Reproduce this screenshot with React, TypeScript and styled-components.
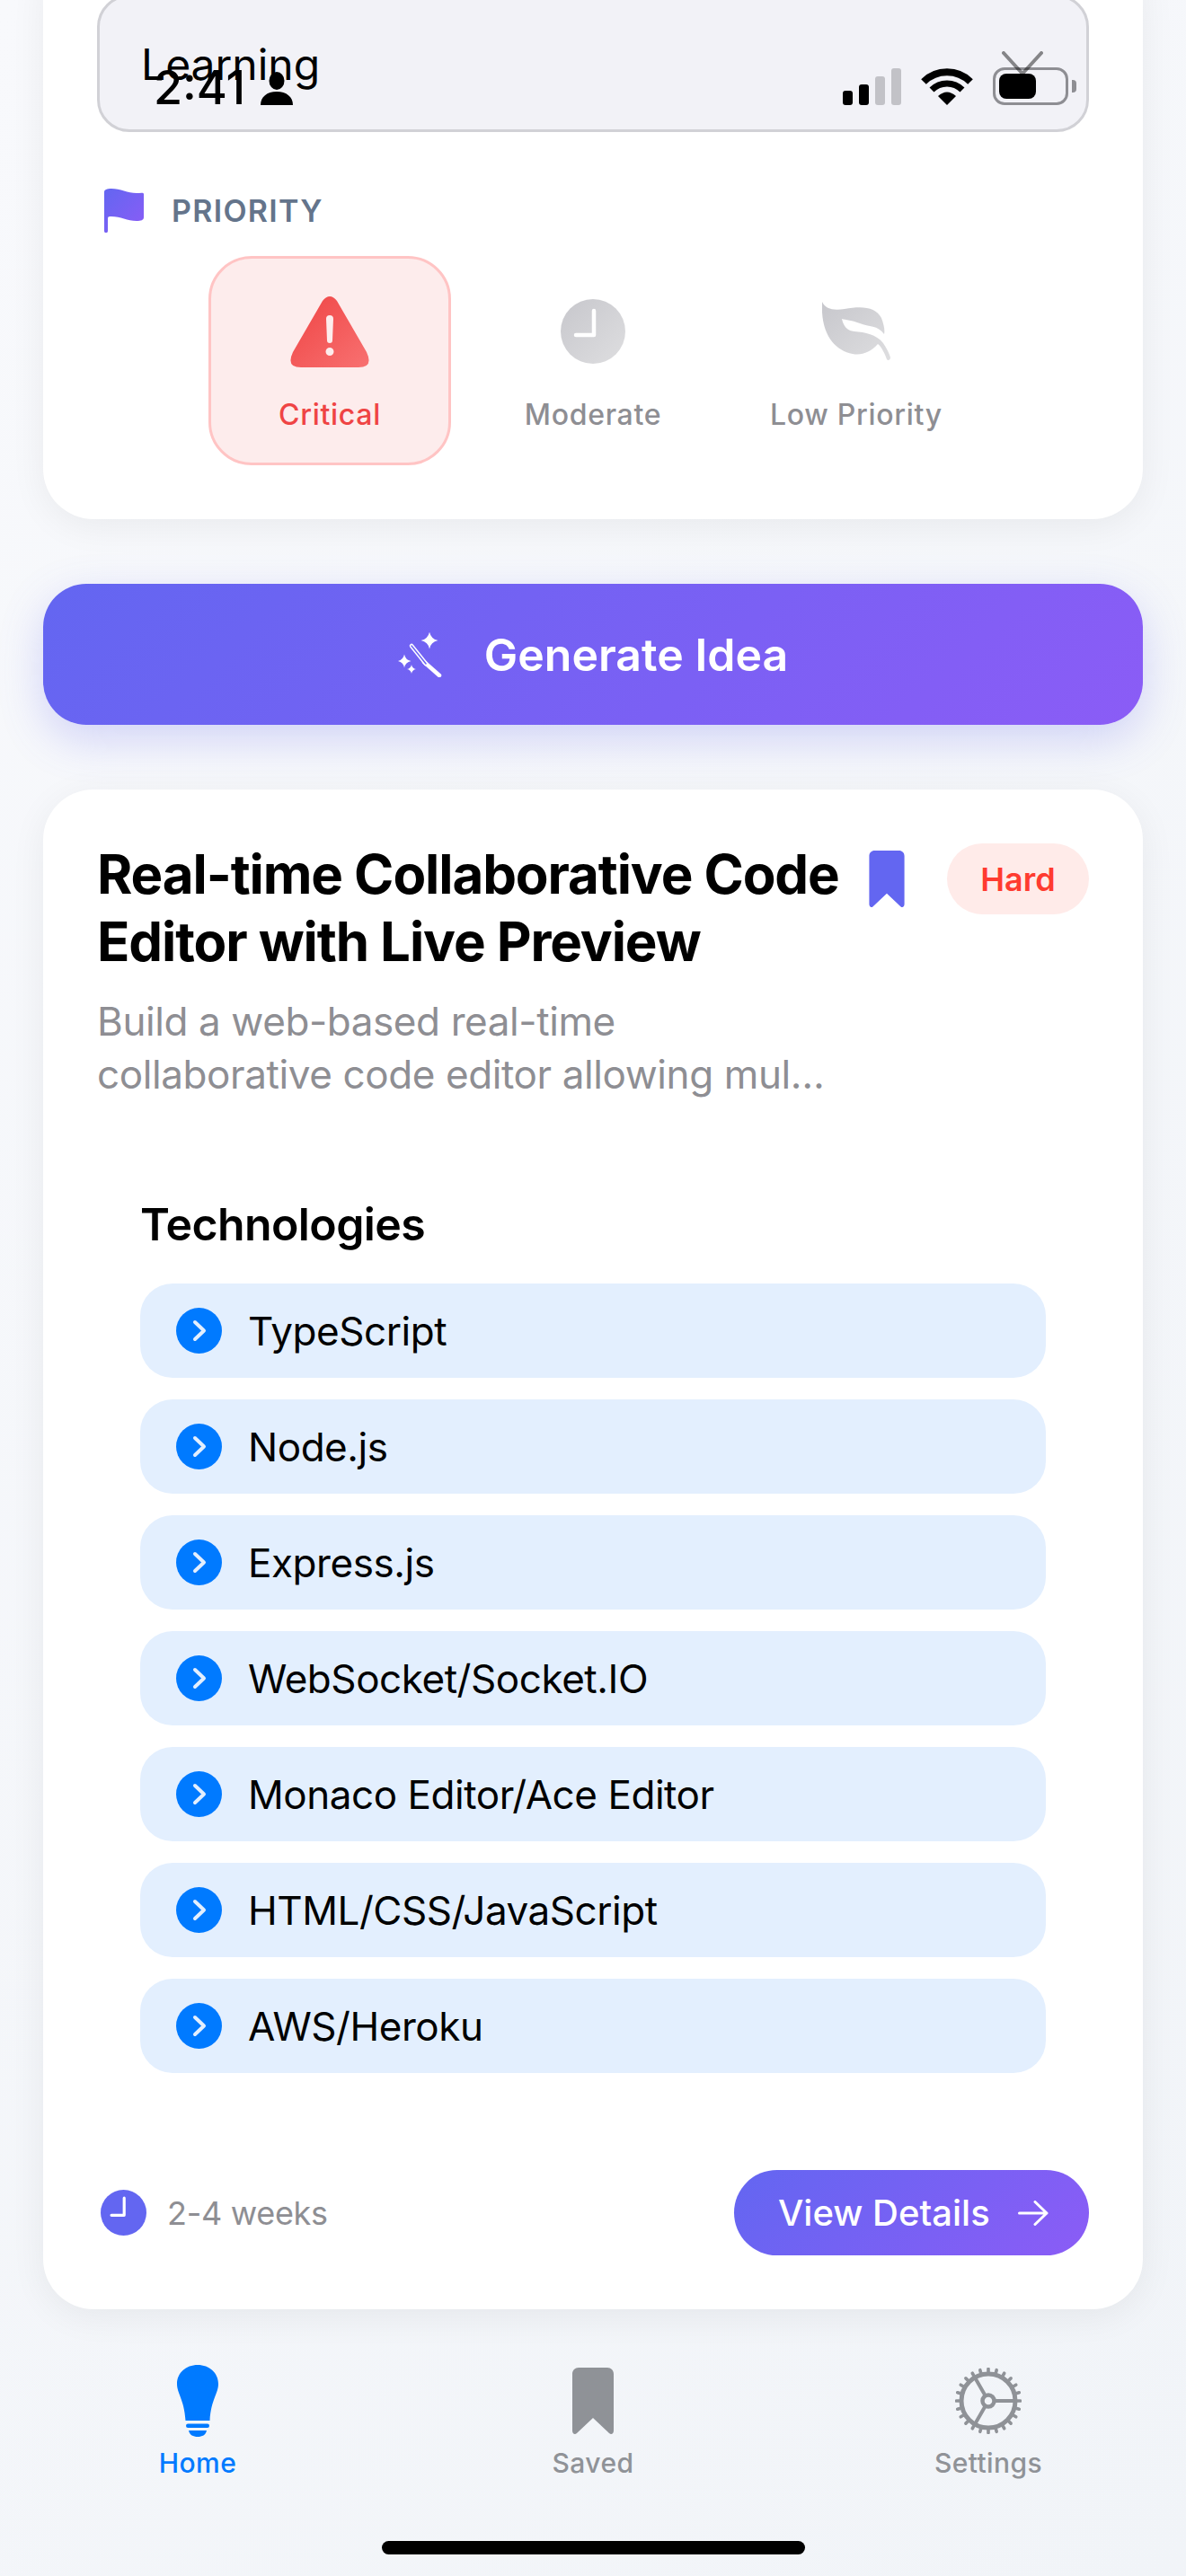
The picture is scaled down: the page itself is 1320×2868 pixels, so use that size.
import React from "react"
import styled, { createGlobalStyle } from "styled-components"

const GlobalStyle = createGlobalStyle`
  html, body {
    margin: 0;
    padding: 0;
    background: #f3f5f9;
    font-family: Inter, "Liberation Sans", sans-serif;
  }
  * {
    box-sizing: border-box;
  }
`

const technologies = [
  "TypeScript",
  "Node.js",
  "Express.js",
  "WebSocket/Socket.IO",
  "Monaco Editor/Ace Editor",
  "HTML/CSS/JavaScript",
  "AWS/Heroku",
]

/**
 * Icons
 */

const Flag = () => (
  <svg width="44" height="49" viewBox="0 0 44 49">
    <defs>
      <linearGradient id="flagFill" x1="0" y1="0" x2="1" y2="1">
        <stop offset="0" stopColor="#6366f1" />
        <stop offset="1" stopColor="#8b5cf6" />
      </linearGradient>
    </defs>
    <path
      fill="url(#flagFill)"
      d="M0 4C0 1 3 0 8 0C18 0 26 5 36 5C40 5 44 4 44 6V32C44 35 41 36 36 36C26 36 18 31 8 31C6 31 4 31 4 33V47C4 50 0 50 0 47Z"
    />
  </svg>
)

const Warning = () => (
  <svg width="88" height="80" viewBox="0 0 88 80">
    <defs>
      <linearGradient id="warnFill" x1="0" y1="0" x2="1" y2="1">
        <stop offset="0" stopColor="#ef4444" />
        <stop offset="1" stopColor="#f87171" />
      </linearGradient>
    </defs>
    <path
      fill="url(#warnFill)"
      fillRule="evenodd"
      d="M36 6Q44 -4 52 6L85 63Q93 80 76 80H12Q-5 80 3 63ZM40 26Q40 22 44 22Q48 22 48 26L47 50Q47 53 44 53Q41 53 41 50ZM44 58A4.5 4.5 0 1 0 44 67A4.5 4.5 0 1 0 44 58Z"
    />
  </svg>
)

const ClockFace = ({ size, fill }: { size: number; fill: string }) => (
  <svg width={size} height={size} viewBox="0 0 72 72">
    <circle cx="36" cy="36" r="36" fill={fill} />
    <path d="M37 13V40H17" fill="none" stroke="#fff" strokeWidth="4.5" strokeLinecap="round" strokeLinejoin="round" />
  </svg>
)

const GrayClock = () => (
  <svg width="0" height="0" style={{ position: "absolute" }}>
    <defs>
      <linearGradient id="grayFill" x1="0" y1="0" x2="1" y2="1">
        <stop offset="0" stopColor="#c7c7cc" />
        <stop offset="1" stopColor="#dedee0" />
      </linearGradient>
    </defs>
  </svg>
)

const Leaf = () => (
  <svg width="76" height="66" viewBox="0 0 76 66">
    <path
      fill="url(#grayFill)"
      d="M0 0C4 8 12 10 25 8C45 4 60 6 66 18C69 26 70 32 69 36C62 26 52 28 42 24C34 21 26 20 22 19C24 28 28 32 36 33C48 34 60 36 68 46C72 52 75 58 76 62C76 65 73 66 72 64C70 58 66 50 62 47C54 56 44 60 34 58C14 54 -2 36 0 0Z"
    />
  </svg>
)

const Star = ({ x, y, r }: { x: number; y: number; r: number }) => {
  const k = r * 0.16
  return (
    <path
      fill="#fff"
      d={`M${x} ${y - r}Q${x + k} ${y - k} ${x + r} ${y}Q${x + k} ${y + k} ${x} ${y + r}Q${x - k} ${y + k} ${x - r} ${y}Q${x - k} ${y - k} ${x} ${y - r}Z`}
    />
  )
}

const Wand = () => (
  <svg width="50" height="50" viewBox="0 0 50 50">
    <path d="M29 33L46 48" fill="none" stroke="#fff" strokeWidth="4.5" strokeLinecap="round" />
    <path d="M15 15L31 35" fill="none" stroke="#fff" strokeWidth="4.5" strokeLinecap="round" />
    <path d="M15 15L31 35" fill="none" stroke="#6d65f3" strokeWidth="1.6" strokeLinecap="round" />
    <Star x={35} y={9} r={9.5} />
    <Star x={7} y={32} r={7.5} />
    <Star x={15} y={41} r={5} />
  </svg>
)

const Bookmark = ({ width, height, fill }: { width: number; height: number; fill: string }) => (
  <svg width={width} height={height} viewBox="0 0 46 74">
    <path fill={fill} d="M7 0H39C43 0 46 3 46 7V70C46 74 43 75 41 73L23 56L5 73C3 75 0 74 0 70V7C0 3 3 0 7 0Z" />
  </svg>
)

const Bulb = () => (
  <svg width="46" height="80" viewBox="0 0 46 80">
    <g fill="#007aff">
      <path d="M23 0C36 0 46 9 46 21C46 32 38 38 36.500 62H9.500C8 38 0 32 0 21C0 9 10 0 23 0Z" />
      <rect x="10" y="65.500" width="26" height="4.500" rx="2.200" />
      <path d="M13 73H33C32 78 28 80 23 80C18 80 14 78 13 73Z" />
    </g>
  </svg>
)

const Gear = () => {
  const teeth = Array.from({ length: 24 }, (_, i) => (i * Math.PI) / 12)
  return (
    <svg width="74" height="74" viewBox="0 0 74 74">
      <g fill="none" stroke="#8f9297">
        <circle cx="37" cy="37" r="30" strokeWidth="5" />
        <circle cx="37" cy="37" r="6.500" strokeWidth="4.500" />
        {teeth.map((a) => (
          <line
            key={a}
            x1={37 + Math.cos(a) * 31}
            y1={37 + Math.sin(a) * 31}
            x2={37 + Math.cos(a) * 35.5}
            y2={37 + Math.sin(a) * 35.5}
            strokeWidth="3.600"
            strokeLinecap="round"
          />
        ))}
        <path d="M44 37H66M33.500 31L22 11M33.500 43L22 63" strokeWidth="4" />
      </g>
    </svg>
  )
}

const Chevron = () => (
  <svg width="51" height="51" viewBox="0 0 51 51">
    <circle cx="25.500" cy="25.500" r="25.500" fill="#007aff" />
    <path d="M21 16L31 25.500L21 35" fill="none" stroke="#e3effe" strokeWidth="4" strokeLinecap="round" strokeLinejoin="round" />
  </svg>
)

const Arrow = () => (
  <svg width="34" height="28" viewBox="0 0 34 28">
    <path d="M1.500 14H32M19 1.500L32 14L19 26.500" fill="none" stroke="#fff" strokeWidth="3" strokeLinecap="round" strokeLinejoin="round" />
  </svg>
)

const Person = () => (
  <svg width="36" height="37" viewBox="0 0 36 37">
    <ellipse cx="18" cy="10" rx="8.500" ry="10" />
    <path d="M0 37C0 28 7 22 18 22C29 22 36 28 36 37Z" />
  </svg>
)

const Signal = () => (
  <svg width="65" height="41" viewBox="0 0 65 41">
    <rect x="0" y="25" width="11" height="16" rx="3" />
    <rect x="18" y="18" width="11" height="23" rx="3" />
    <rect x="36" y="9" width="11" height="32" rx="3" fill="#c2c2c7" />
    <rect x="54" y="0" width="11" height="41" rx="3" fill="#c2c2c7" />
  </svg>
)

const Wifi = () => (
  <svg width="58" height="42" viewBox="0 0 58 42">
    <path d="M3 16A37 37 0 0 1 55 16" fill="none" stroke="#000" strokeWidth="8" />
    <path d="M12 25A24 24 0 0 1 46 25" fill="none" stroke="#000" strokeWidth="7" />
    <path d="M19 32Q29 23 39 32L29 42Z" />
  </svg>
)

const Antenna = () => (
  <AntennaMark width="46" height="27" viewBox="0 0 46 27">
    <path d="M2 2L23 25L44 2" fill="none" stroke="#000" strokeOpacity="0.45" strokeWidth="4" strokeLinecap="round" strokeLinejoin="round" />
  </AntennaMark>
)

/**
 * App
 */

export default function App() {
  return (
    <Page>
      <GlobalStyle />
      <GrayClock />
      <StatusBar>
        <TimeGroup>
          <Time>2:41</Time>
          <Person />
        </TimeGroup>
        <StatusIcons>
          <Signal />
          <Wifi />
          <BatteryWrap>
            <Battery>
              <BatteryLevel />
              <Antenna />
            </Battery>
            <BatteryTip />
          </BatteryWrap>
        </StatusIcons>
      </StatusBar>

      <Card>
        <CategoryField>Learning</CategoryField>
        <SectionHeader>
          <Flag />
          <SectionLabel>PRIORITY</SectionLabel>
        </SectionHeader>
        <PriorityRow>
          <PriorityOption $selected>
            <IconSlot>
              <Warning />
            </IconSlot>
            <PriorityText $selected>Critical</PriorityText>
          </PriorityOption>
          <PriorityOption>
            <IconSlot>
              <ClockFace size={72} fill="url(#grayFill)" />
            </IconSlot>
            <PriorityText>Moderate</PriorityText>
          </PriorityOption>
          <PriorityOption>
            <IconSlot>
              <Leaf />
            </IconSlot>
            <PriorityText>Low Priority</PriorityText>
          </PriorityOption>
        </PriorityRow>
      </Card>

      <GenerateButton>
        <Wand />
        <GenerateText>Generate Idea</GenerateText>
      </GenerateButton>

      <ResultCard>
        <ResultHead>
          <Title>Real-time Collaborative Code Editor with Live Preview</Title>
          <BookmarkSlot>
            <Bookmark width={40} height={63} fill="#6366f1" />
          </BookmarkSlot>
          <Difficulty>Hard</Difficulty>
        </ResultHead>
        <Description>Build a web-based real-time collaborative code editor allowing mul…</Description>

        <TechSection>
          <TechHeading>Technologies</TechHeading>
          <TechList>
            {technologies.map((tech) => (
              <TechRow key={tech}>
                <Chevron />
                <TechName>{tech}</TechName>
              </TechRow>
            ))}
          </TechList>
        </TechSection>

        <ResultFooter>
          <Duration>
            <ClockFace size={51} fill="#6366f1" />
            <DurationText>2-4 weeks</DurationText>
          </Duration>
          <DetailsButton>
            <DetailsText>View Details</DetailsText>
            <Arrow />
          </DetailsButton>
        </ResultFooter>
      </ResultCard>

      <TabBar>
        <Tab>
          <TabIcon>
            <Bulb />
          </TabIcon>
          <TabLabel $active>Home</TabLabel>
        </Tab>
        <Tab>
          <TabIcon>
            <Bookmark width={46} height={74} fill="#8f9297" />
          </TabIcon>
          <TabLabel>Saved</TabLabel>
        </Tab>
        <Tab>
          <TabIcon>
            <Gear />
          </TabIcon>
          <TabLabel>Settings</TabLabel>
        </Tab>
      </TabBar>
      <HomeIndicator />
    </Page>
  )
}

/**
 * Styled components
 */

const Page = styled("div")`
  position: relative;
  display: flex;
  flex-direction: column;
  width: 1320px;
  height: 2868px;
  padding: 0 48px;
  overflow: hidden;
  background: linear-gradient(135deg, #f8f9fc 0%, #f1f4f8 100%);
`

const StatusBar = styled("div")`
  position: absolute;
  top: 0;
  left: 171px;
  right: 122px;
  height: 117px;
  display: flex;
  align-items: flex-end;
  justify-content: space-between;
  z-index: 2;
`

const TimeGroup = styled("div")`
  display: flex;
  align-items: flex-end;
  gap: 17px;
`

const Time = styled("span")`
  font-size: 52px;
  line-height: 38px;
  font-weight: 500;
  color: #000;
`

const StatusIcons = styled("div")`
  display: flex;
  align-items: flex-end;
  gap: 22px;
`

const BatteryWrap = styled("div")`
  display: flex;
  align-items: center;
  gap: 4px;
`

const Battery = styled("div")`
  position: relative;
  width: 84px;
  height: 42px;
  padding: 4px;
  border: 3px solid #8e8e93;
  border-radius: 13px;
`

const BatteryLevel = styled("div")`
  width: 41px;
  height: 28px;
  border-radius: 8px;
  background: #000;
`

const BatteryTip = styled("div")`
  width: 5px;
  height: 14px;
  border-radius: 0 4px 4px 0;
  background: #8e8e93;
`

const AntennaMark = styled("svg")`
  position: absolute;
  top: -21px;
  left: 7px;
`

const Card = styled("section")`
  display: flex;
  flex-direction: column;
  flex: none;
  height: 638px;
  margin-top: -60px;
  padding: 54px 60px 60px;
  border-radius: 56px;
  background: #fff;
  box-shadow: 0 8px 40px rgba(0, 0, 0, 0.06);
`

const CategoryField = styled("div")`
  flex: none;
  height: 153px;
  padding: 46px 0 0 46px;
  border: 3px solid #d1d1d6;
  border-radius: 36px;
  background: #f2f2f7;
  color: #000;
  font-size: 48px;
  line-height: 58px;
`

const SectionHeader = styled("div")`
  display: flex;
  align-items: center;
  gap: 31px;
  margin: 63px 0 26px 8px;
`

const SectionLabel = styled("span")`
  color: #64748b;
  font-size: 34px;
  font-weight: 600;
  letter-spacing: 1.3px;
`

const PriorityRow = styled("div")`
  display: flex;
  justify-content: center;
  gap: 23px;
`

const PriorityOption = styled("div")<{ $selected?: boolean }>`
  display: flex;
  flex-direction: column;
  align-items: center;
  width: 270px;
  height: 233px;
  padding-top: 41px;
  border: 3px solid ${(p) => (p.$selected ? "#ffc4c4" : "transparent")};
  border-radius: 48px;
  background: ${(p) => (p.$selected ? "#fdecec" : "transparent")};
`

const IconSlot = styled("div")`
  display: flex;
  align-items: center;
  justify-content: center;
  height: 80px;
`

const PriorityText = styled("span")<{ $selected?: boolean }>`
  margin-top: 33px;
  color: ${(p) => (p.$selected ? "#ef4444" : "#8e8e93")};
  font-size: 32px;
  font-weight: 500;
  letter-spacing: 0.7px;
  line-height: 40px;
`

const GenerateButton = styled("button")`
  display: flex;
  flex: none;
  align-items: center;
  justify-content: center;
  gap: 46px;
  height: 157px;
  margin-top: 72px;
  padding: 0;
  border: 0;
  border-radius: 48px;
  background: linear-gradient(135deg, #6366f1 0%, #8b5cf6 100%);
  box-shadow: 0 16px 48px rgba(99, 102, 241, 0.25);
  font-family: inherit;
`

const GenerateText = styled("span")`
  color: #fff;
  font-size: 50px;
  font-weight: 600;
`

const ResultCard = styled("section")`
  display: flex;
  flex-direction: column;
  flex: none;
  height: 1692px;
  margin-top: 72px;
  padding: 57px 60px 0;
  border-radius: 56px;
  background: #fff;
  box-shadow: 0 8px 40px rgba(0, 0, 0, 0.06);
`

const ResultHead = styled("div")`
  display: flex;
  align-items: flex-start;
`

const Title = styled("h2")`
  width: 840px;
  margin: 0;
  color: #000;
  font-size: 60px;
  font-weight: 700;
  letter-spacing: -1.1px;
  line-height: 75px;
`

const BookmarkSlot = styled("div")`
  margin: 11px 0 0 19px;
`

const Difficulty = styled("span")`
  display: flex;
  align-items: center;
  justify-content: center;
  width: 158px;
  height: 79px;
  margin: 3px 0 0 47px;
  border-radius: 40px;
  background: #ffebe9;
  color: #ff3b30;
  font-size: 36px;
  font-weight: 600;
`

const Description = styled("p")`
  width: 840px;
  margin: 22px 0 0;
  color: #8e8e93;
  font-size: 44px;
  letter-spacing: -0.4px;
  line-height: 59px;
`

const TechSection = styled("div")`
  margin: 106px 48px 0;
`

const TechHeading = styled("h3")`
  margin: 0 0 35px;
  color: #000;
  font-size: 50px;
  font-weight: 600;
  letter-spacing: -0.6px;
  line-height: 62px;
`

const TechList = styled("div")`
  display: flex;
  flex-direction: column;
  gap: 24px;
`

const TechRow = styled("div")`
  display: flex;
  align-items: center;
  gap: 29px;
  height: 105px;
  padding-left: 40px;
  border-radius: 36px;
  background: #e3effe;
`

const TechName = styled("span")`
  color: #000;
  font-size: 44px;
  letter-spacing: -0.45px;
`

const ResultFooter = styled("div")`
  display: flex;
  align-items: center;
  justify-content: space-between;
  margin-top: 108px;
`

const Duration = styled("div")`
  display: flex;
  align-items: center;
  gap: 23px;
  margin-left: 4px;
`

const DurationText = styled("span")`
  color: #8e8e93;
  font-size: 36px;
  letter-spacing: -0.3px;
`

const DetailsButton = styled("button")`
  display: flex;
  align-items: center;
  gap: 31px;
  width: 395px;
  height: 95px;
  padding: 0 0 0 49px;
  border: 0;
  border-radius: 48px;
  background: linear-gradient(135deg, #6366f1 0%, #8b5cf6 100%);
  font-family: inherit;
`

const DetailsText = styled("span")`
  color: #fff;
  font-size: 40px;
  font-weight: 500;
`

const TabBar = styled("nav")`
  display: grid;
  grid-template-columns: repeat(3, 1fr);
  margin: 62px -48px 0;
`

const Tab = styled("div")`
  display: flex;
  flex-direction: column;
  align-items: center;
`

const TabIcon = styled("div")`
  display: flex;
  align-items: center;
  justify-content: center;
  height: 80px;
`

const TabLabel = styled("span")<{ $active?: boolean }>`
  margin-top: 10px;
  color: ${(p) => (p.$active ? "#007aff" : "#8f9297")};
  font-size: 30px;
  font-weight: 500;
  letter-spacing: 0.4px;
  line-height: 38px;
`

const HomeIndicator = styled("div")`
  position: absolute;
  left: 425px;
  bottom: 24px;
  width: 471px;
  height: 15px;
  border-radius: 8px;
  background: #000;
`
